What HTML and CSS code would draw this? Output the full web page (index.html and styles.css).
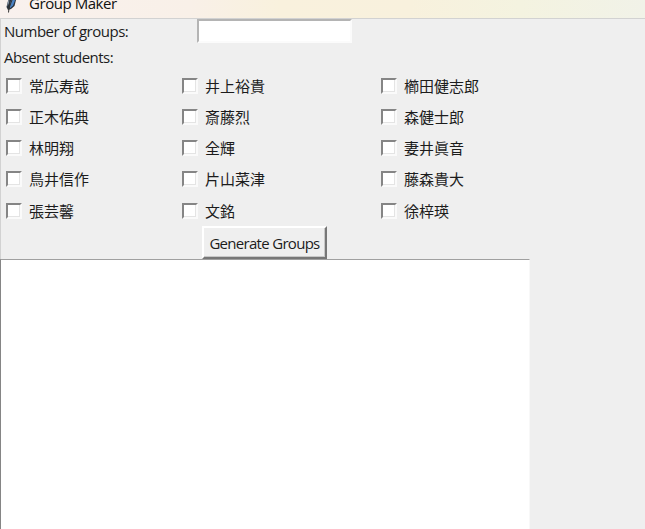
FILE: index.html
```html
<!DOCTYPE html>
<html lang="ja">
<head>
<meta charset="utf-8">
<title>Group Maker</title>
<link rel="stylesheet" href="styles.css">
</head>
<body>
<header class="titlebar">
  <svg class="feather" width="12" height="16" viewBox="0 0 12 16">
    <path d="M10.5 0 11 3 9.5 9 6 12 3 13 1.5 10 3 4 5 0Z" fill="#2a323c"/>
    <path d="M10 0 9.8 4 8 8.5 4.8 11.5 5.5 5 8 0Z" fill="#4a82c4"/>
    <path d="M4.5 1 2.5 6 2.5 9.5 4 6Z" fill="#8795a5"/>
    <path d="M7 3 4 11 3.5 15.5" fill="none" stroke="#343434" stroke-width="1"/>
  </svg>
  <span class="title">Group Maker</span>
</header>
<main class="client">
  <div class="entry-row">
    <label class="label groups-label" for="count">Number of groups:</label>
    <input class="entry" id="count" type="text">
  </div>
  <div class="absent-row"><span class="label absent-label">Absent students:</span></div>
  <div class="students">
    <label class="student"><i class="box"></i><span>常広寿哉</span></label>
    <label class="student"><i class="box"></i><span>井上裕貴</span></label>
    <label class="student"><i class="box"></i><span>櫛田健志郎</span></label>
    <label class="student"><i class="box"></i><span>正木佑典</span></label>
    <label class="student"><i class="box"></i><span>斎藤烈</span></label>
    <label class="student"><i class="box"></i><span>森健士郎</span></label>
    <label class="student"><i class="box"></i><span>林明翔</span></label>
    <label class="student"><i class="box"></i><span>全輝</span></label>
    <label class="student"><i class="box"></i><span>妻井眞音</span></label>
    <label class="student"><i class="box"></i><span>鳥井信作</span></label>
    <label class="student"><i class="box"></i><span>片山菜津</span></label>
    <label class="student"><i class="box"></i><span>藤森貴大</span></label>
    <label class="student"><i class="box"></i><span>張芸馨</span></label>
    <label class="student"><i class="box"></i><span>文銘</span></label>
    <label class="student"><i class="box"></i><span>徐梓瑛</span></label>
  </div>
  <button class="generate" type="button"><span>Generate Groups</span></button>
  <div class="output"></div>
</main>
</body>
</html>
```
FILE: styles.css
```css
* { box-sizing: border-box; }
body {
  margin: 0;
  height: 529px;
  overflow: hidden;
  background: #efefef;
  color: #1c1c1c;
  font-family: "Open Sans", "Noto Sans CJK JP", sans-serif;
  font-size: 15px;
}
.titlebar {
  display: flex;
  align-items: flex-start;
  height: 19px;
  padding-left: 5px;
  border-bottom: 1px solid #d2d2d2;
  background: linear-gradient(90deg, #f9f1ee 0, #f9f0e8 190px, #f9f1dd 280px, #f8f1dd 410px, #f4f3e0 520px, #f1f2e8 645px);
}
.feather { flex: none; margin-top: -3px; }
.title {
  margin: -7px 0 0 12px;
  line-height: 20px;
  color: #111;
  letter-spacing: -0.45px;
}
.client {
  height: 510px;
  border-left: 1px solid #d2d2d2;
}
.label { white-space: nowrap; line-height: 24px; }
.entry-row { display: flex; height: 26px; padding-left: 3px; }
.groups-label { width: 193px; letter-spacing: -0.5px; }
.entry {
  width: 155px;
  height: 24px;
  padding: 0 2px;
  border: 2px solid;
  border-color: #b4b4b4 #fbfbfb #fbfbfb #b4b4b4;
  outline: 0;
  background: #fff;
}
.absent-row { height: 25px; padding-left: 3px; }
.absent-label { display: block; line-height: 25px; letter-spacing: -0.53px; }
.students {
  display: grid;
  grid-template-columns: 176px 199px 160px;
  grid-auto-rows: 31.25px;
  height: 157px;
  padding-left: 5px;
}
.student { display: flex; align-items: center; gap: 7px; white-space: nowrap; }
.student span { line-height: 20px; }
.box {
  width: 16px;
  height: 16px;
  border: 2px solid;
  border-color: #858585 #fafafa #fafafa #858585;
  background: #fff;
  box-shadow: inset -1px -1px #e4e4e4;
}
.generate {
  display: block;
  width: 125px;
  height: 33px;
  margin: -1px 0 0 201px;
  padding: 0;
  border: 2px solid;
  border-color: #fff #777 #777 #fff;
  background: #efefef;
  box-shadow: inset -1px -1px #c8c8c8;
  color: inherit;
  font: inherit;
  line-height: 28px;
  letter-spacing: -0.7px;
  white-space: nowrap;
}
.output {
  width: 530px;
  height: 290px;
  margin-left: -1px;
  border: 1px solid;
  border-color: #a0a0a0 #f8f8f8 #f8f8f8 #858585;
  background: #fff;
}
```
